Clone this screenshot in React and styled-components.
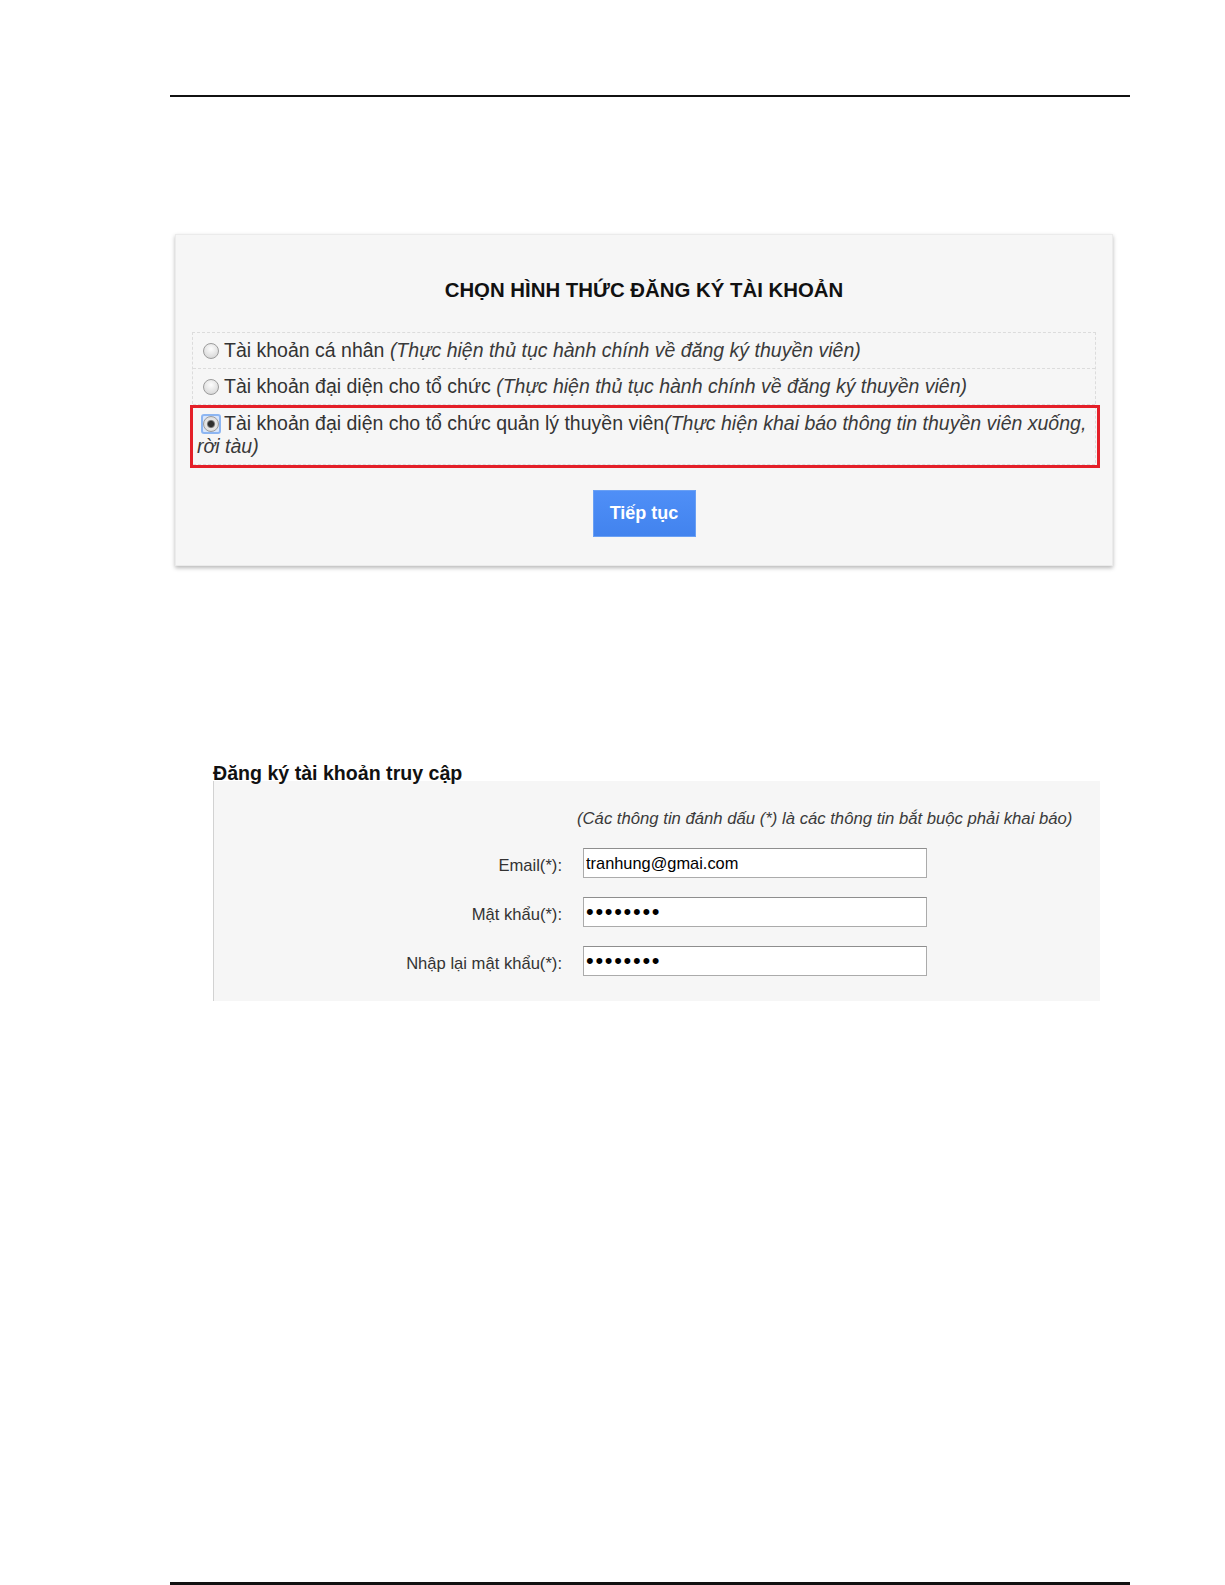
import React from "react";
import styled, { createGlobalStyle } from "styled-components";

const GlobalStyle = createGlobalStyle`
  html, body {
    margin: 0;
    padding: 0;
    background: #fff;
  }
  body {
    font-family: "Liberation Sans", Arial, sans-serif;
    color: #333;
  }
`;

const Page = styled.div`
  box-sizing: border-box;
  width: 1225px;
  height: 1585px;
  padding: 95px 95px 0 170px;
  display: flex;
  flex-direction: column;
`;

const Rule = styled.div`
  height: ${props => props.$thick}px;
  background: #111;
  flex-shrink: 0;
`;

const FooterRule = styled(Rule)`
  margin-top: auto;
`;

const Card = styled.section`
  box-sizing: border-box;
  margin: 137px 0 0 5px;
  width: 938px;
  height: 332px;
  padding: 43px 16px 0;
  background: #f6f6f6;
  border: 1px solid #ebebeb;
  box-shadow: 0 2px 4px rgba(0, 0, 0, 0.28);
  display: flex;
  flex-direction: column;
`;

const CardTitle = styled.h2`
  margin: 0 0 30px;
  font-size: 20.4px;
  line-height: 24px;
  font-weight: bold;
  text-align: center;
  color: #111;
`;

const OptionList = styled.div`
  border-top: 1px dashed #dcdcdc;
  border-left: 1px dashed #dcdcdc;
  border-right: 1px dashed #dcdcdc;
`;

const OptionRow = styled.label`
  display: block;
  padding: ${props => (props.$tight ? "4px 4px 6px" : "6px 4px")};
  border-bottom: 1px dashed #dcdcdc;
  font-size: 19.5px;
  line-height: 23px;
  color: #333;
  cursor: pointer;
`;

const Hint = styled.i`
  color: #3a3a3a;
`;

const Highlight = styled.div`
  margin: 0 -5px 0 -3px;
  padding: 0 2px 0 0;
  border: 3px solid #e41f28;
`;

const RadioFrame = styled.span`
  display: inline-flex;
  box-sizing: border-box;
  width: 20px;
  height: 20px;
  margin: 0 3px 0 4px;
  vertical-align: -2px;
  align-items: center;
  justify-content: center;
  border-radius: 3px;
  border: 2px solid ${props => (props.$focused ? "#8db6f2" : "transparent")};
  background: ${props => (props.$focused ? "#d9e6fb" : "transparent")};
`;

const Radio = styled.input.attrs({ type: "radio" })`
  appearance: none;
  -webkit-appearance: none;
  box-sizing: border-box;
  width: 16px;
  height: 16px;
  margin: 0;
  border-radius: 50%;
  border: 1px solid #9c9c9c;
  background: radial-gradient(circle at 50% 35%, #fdfdfd 0, #e4e4e4 55%, #cdcdcd 100%);
  cursor: pointer;

  &:checked {
    background: radial-gradient(circle, #2f2f2f 0 2.6px, #6a6a6a 3.4px, #e8e8e8 4.6px, #cfcfcf 100%);
  }
`;

const SubmitButton = styled.button`
  align-self: center;
  margin-top: 22px;
  width: 103px;
  height: 47px;
  border: 1px solid #6aa0f4;
  background: linear-gradient(#4f8ff7, #4283ee);
  color: #fff;
  font-family: "Liberation Sans", Arial, sans-serif;
  font-size: 18px;
  font-weight: bold;
  cursor: pointer;
`;

const SectionTitle = styled.h3`
  position: relative;
  z-index: 1;
  margin: 199px 0 0 43px;
  font-size: 19.6px;
  line-height: 16px;
  font-weight: bold;
  color: #111;
`;

const Panel = styled.div`
  box-sizing: border-box;
  margin-left: 43px;
  width: 887px;
  height: 220px;
  padding-top: 28px;
  background: #f6f6f6;
  border-left: 1px solid #d2d2d2;
`;

const Note = styled.p`
  margin: 0 0 20px;
  padding-left: 363px;
  font-size: 16.7px;
  line-height: 19px;
  font-style: italic;
  color: #3a3a3a;
`;

const Form = styled.div`
  display: grid;
  grid-template-columns: 348px 344px;
  column-gap: 21px;
  row-gap: 19px;
  align-items: center;
`;

const FieldLabel = styled.label`
  padding-top: 5px;
  text-align: right;
  font-size: 16.6px;
  line-height: 19px;
  color: #333;
`;

const TextInput = styled.input`
  box-sizing: border-box;
  width: 100%;
  height: 30px;
  margin: 0;
  padding: 0 2px;
  border: 1px solid #ababab;
  border-top-color: #8e8e8e;
  background: #fff;
  color: #000;
  font-family: "Liberation Sans", Arial, sans-serif;
  font-size: ${props => (props.type === "password" ? "22px" : "16.4px")};
  letter-spacing: ${props => (props.type === "password" ? "1.7px" : "0")};
  outline: none;
`;

const options = [
  { label: "Tài khoản cá nhân ", hint: "(Thực hiện thủ tục hành chính về đăng ký thuyền viên)" },
  { label: "Tài khoản đại diện cho tổ chức ", hint: "(Thực hiện thủ tục hành chính về đăng ký thuyền viên)" },
];

const fields = [
  { id: "email", label: "Email(*):", type: "text", value: "tranhung@gmai.com" },
  { id: "pass", label: "Mật khẩu(*):", type: "password", value: "12345678" },
  { id: "repass", label: "Nhập lại mật khẩu(*):", type: "password", value: "12345678" },
];

const App = () => {
  return (
    <Page>
      <GlobalStyle />
      <Rule $thick={2} />

      <Card>
        <CardTitle>CHỌN HÌNH THỨC ĐĂNG KÝ TÀI KHOẢN</CardTitle>
        <OptionList>
          {options.map((opt, i) => (
            <OptionRow key={i}>
              <RadioFrame>
                <Radio name="accountType" />
              </RadioFrame>
              {opt.label}
              <Hint>{opt.hint}</Hint>
            </OptionRow>
          ))}
          <Highlight>
            <OptionRow $tight>
              <RadioFrame $focused>
                <Radio name="accountType" defaultChecked />
              </RadioFrame>
              Tài khoản đại diện cho tổ chức quản lý thuyền viên
              <Hint>(Thực hiện khai báo thông tin thuyền viên xuống, rời tàu)</Hint>
            </OptionRow>
          </Highlight>
        </OptionList>
        <SubmitButton type="button">Tiếp tục</SubmitButton>
      </Card>

      <SectionTitle>Đăng ký tài khoản truy cập</SectionTitle>
      <Panel>
        <Note>(Các thông tin đánh dấu (*) là các thông tin bắt buộc phải khai báo)</Note>
        <Form>
          {fields.map(f => (
            <React.Fragment key={f.id}>
              <FieldLabel htmlFor={f.id}>{f.label}</FieldLabel>
              <TextInput id={f.id} type={f.type} defaultValue={f.value} readOnly />
            </React.Fragment>
          ))}
        </Form>
      </Panel>

      <FooterRule $thick={3} />
    </Page>
  );
};

export default App;
